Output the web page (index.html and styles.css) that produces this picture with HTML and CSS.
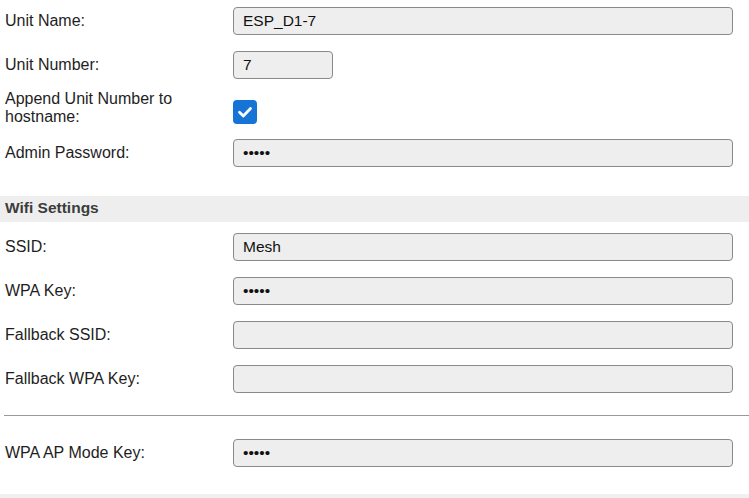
FILE: index.html
```html
<!DOCTYPE html>
<html>
<head>
<meta charset="utf-8">
<link rel="stylesheet" href="styles.css">
</head>
<body>
<form class="page">
  <div class="row">
    <label class="lbl">Unit Name:</label>
    <input class="field wide" type="text" value="ESP_D1-7">
  </div>
  <div class="row">
    <label class="lbl">Unit Number:</label>
    <input class="field narrow" type="text" value="7">
  </div>
  <div class="row row-check">
    <label class="lbl">Append Unit Number to<br>hostname:</label>
    <span class="checkbox">
      <svg viewBox="0 0 24 24" width="24" height="24"><path d="M6.5 12.3 L10.3 16 L17.5 8.5" fill="none" stroke="#fff" stroke-width="2.8" stroke-linecap="round" stroke-linejoin="round"/></svg>
    </span>
  </div>
  <div class="row">
    <label class="lbl">Admin Password:</label>
    <input class="field wide" type="password" value="12345">
  </div>

  <div class="section">Wifi Settings</div>

  <div class="row">
    <label class="lbl">SSID:</label>
    <input class="field wide" type="text" value="Mesh">
  </div>
  <div class="row">
    <label class="lbl">WPA Key:</label>
    <input class="field wide" type="password" value="12345">
  </div>
  <div class="row">
    <label class="lbl">Fallback SSID:</label>
    <input class="field wide" type="text" value="">
  </div>
  <div class="row">
    <label class="lbl">Fallback WPA Key:</label>
    <input class="field wide" type="password" value="">
  </div>

  <hr class="sep">

  <div class="row">
    <label class="lbl">WPA AP Mode Key:</label>
    <input class="field wide" type="password" value="12345">
  </div>

  <div class="footer-band"></div>
</form>
</body>
</html>
```
FILE: styles.css
```css
html, body {
  margin: 0;
  padding: 0;
  background: #fff;
}
body {
  font-family: "Liberation Sans", Arial, sans-serif;
  font-size: 16px;
  color: #1e1e1e;
  overflow: hidden;
}
.page {
  width: 760px;
  display: flex;
  flex-direction: column;
}
.row {
  display: flex;
  align-items: center;
  padding: 7px 0 9px;
}
.row-check {
  align-items: flex-start;
  padding: 2px 0 6px;
}
.row-check .checkbox {
  margin-top: 10px;
}
.lbl {
  width: 228px;
  padding-left: 5px;
  line-height: 18px;
  flex: none;
}
.field {
  box-sizing: border-box;
  height: 28px;
  border: 1px solid #8a8a8a;
  border-radius: 4px;
  background: #eeeeee;
  font-family: "Liberation Sans", Arial, sans-serif;
  font-size: 15.5px;
  color: #111;
  padding: 0 9px;
  margin: 0;
  outline: none;
}
.wide { width: 500px; }
.narrow { width: 100px; }
.checkbox {
  width: 24px;
  height: 24px;
  border-radius: 4px;
  background: #1674d6;
  display: flex;
}
.section {
  margin-top: 20px;
  margin-bottom: 4px;
  height: 26px;
  box-sizing: border-box;
  padding-bottom: 2px;
  background: #eeeeee;
  font-weight: bold;
  font-size: 15.5px;
  color: #3c3c3c;
  display: flex;
  align-items: center;
  padding-left: 5px;
}
.sep {
  margin: 13px 0 16px 4px;
  border: none;
  border-top: 1px solid #9a9a9a;
  height: 0;
}
.footer-band {
  margin-top: 18px;
  height: 10px;
  background: #f0f0f0;
}
```
